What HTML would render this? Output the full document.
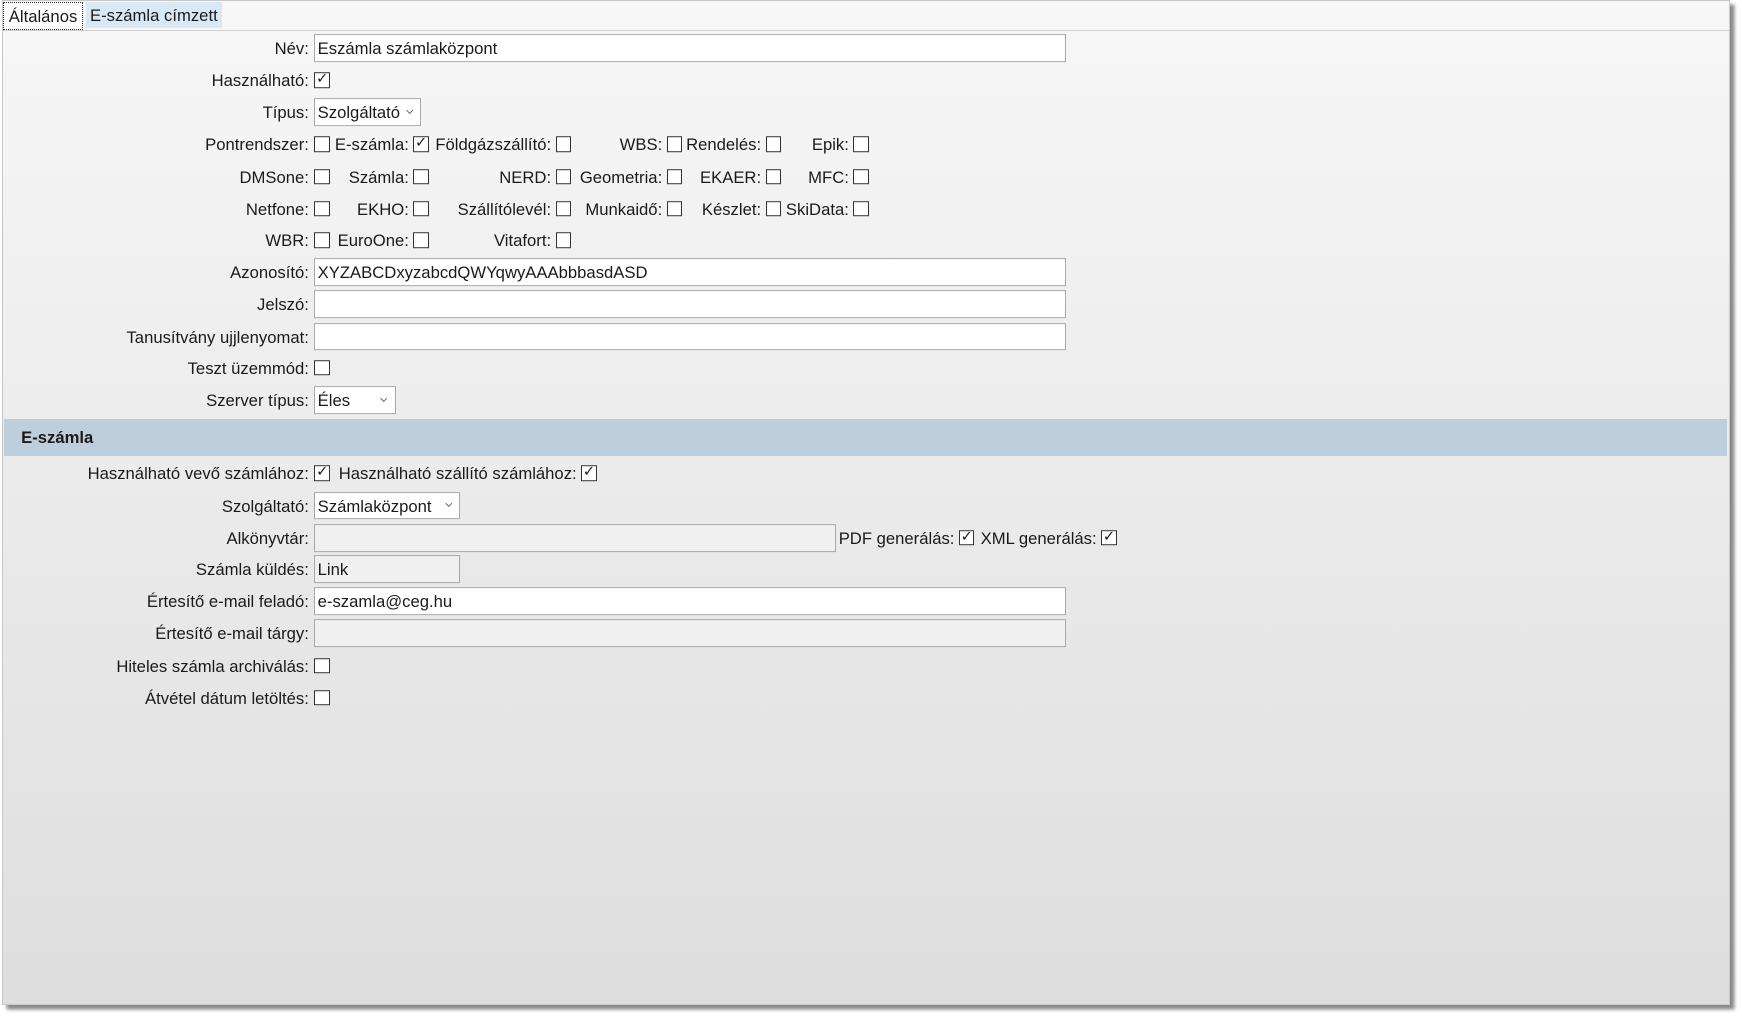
<!DOCTYPE html>
<html><head><meta charset="utf-8"><style>
html,body{margin:0;padding:0;width:1742px;height:1017px;overflow:hidden;background:#fff;}
#w{zoom:1.1111;position:relative;width:1568px;height:915px;font-family:"Liberation Sans",sans-serif;font-size:15px;color:#1a1a1a;}
#frame{position:absolute;left:2px;top:0;width:1553px;height:903px;border:1px solid #c8c8c8;box-shadow:4px 4px 3px #8a8a8a;background:linear-gradient(#f7f7f7,#dedede);}
.tab{position:absolute;top:2px;height:23px;line-height:25px;padding:0 4px;}
.t1{left:3px;background:#fff;border:1px dotted #333;}
.t2{left:77px;width:115px;background:#d9e8f5;}
.tl{position:absolute;left:3px;right:12px;top:27px;border-top:1px solid #d0d0d0;}
.lb{position:absolute;white-space:nowrap;transform:translate(-100%,-45%);}
.in{position:absolute;left:283px;border:1px solid #a8a8a8;background:#fff;box-sizing:border-box;height:25px;line-height:25px;padding-left:2px;transform:translateY(-50%);}
.g{background:#f0f0f0;}
.cb{position:absolute;width:14px;height:14px;border:1px solid #333;background:#fff;box-sizing:border-box;transform:translateY(-50%);font-size:13px;line-height:12px;text-align:center;}
.dd::after{content:"";position:absolute;right:7px;top:8px;width:4px;height:4px;border-right:1px solid #666;border-bottom:1px solid #666;transform:rotate(45deg);}
.band{position:absolute;left:4px;width:1550px;top:377px;height:33px;background:#bfcedb;}
.band span{position:absolute;left:15px;top:8px;font-weight:bold;}
</style></head><body><div id="w">
<div id="frame"></div>
<div class="tab t1">Általános</div><div class="tab t2">E-számla címzett</div><div class="tl"></div>
<div class="band"><span>E-számla</span></div>

<div class="lb" style="left:278px;top:43px">Név:</div><div class="in" style="top:43px;width:676px">Eszámla számlaközpont</div>
<div class="lb" style="left:278px;top:72px">Használható:</div><div class="cb" style="left:283px;top:72px">✓</div>
<div class="lb" style="left:278px;top:101px">Típus:</div><div class="in dd" style="top:101px;width:96px">Szolgáltató</div>

<div class="lb" style="left:278px;top:130px">Pontrendszer:</div><div class="cb" style="left:283px;top:130px"></div>
<div class="lb" style="left:368px;top:130px">E-számla:</div><div class="cb" style="left:372px;top:130px">✓</div>
<div class="lb" style="left:496px;top:130px">Földgázszállító:</div><div class="cb" style="left:500px;top:130px"></div>
<div class="lb" style="left:596px;top:130px">WBS:</div><div class="cb" style="left:600px;top:130px"></div>
<div class="lb" style="left:685px;top:130px">Rendelés:</div><div class="cb" style="left:689px;top:130px"></div>
<div class="lb" style="left:764px;top:130px">Epik:</div><div class="cb" style="left:768px;top:130px"></div>

<div class="lb" style="left:278px;top:159px">DMSone:</div><div class="cb" style="left:283px;top:159px"></div>
<div class="lb" style="left:368px;top:159px">Számla:</div><div class="cb" style="left:372px;top:159px"></div>
<div class="lb" style="left:496px;top:159px">NERD:</div><div class="cb" style="left:500px;top:159px"></div>
<div class="lb" style="left:596px;top:159px">Geometria:</div><div class="cb" style="left:600px;top:159px"></div>
<div class="lb" style="left:685px;top:159px">EKAER:</div><div class="cb" style="left:689px;top:159px"></div>
<div class="lb" style="left:764px;top:159px">MFC:</div><div class="cb" style="left:768px;top:159px"></div>

<div class="lb" style="left:278px;top:188px">Netfone:</div><div class="cb" style="left:283px;top:188px"></div>
<div class="lb" style="left:368px;top:188px">EKHO:</div><div class="cb" style="left:372px;top:188px"></div>
<div class="lb" style="left:496px;top:188px">Szállítólevél:</div><div class="cb" style="left:500px;top:188px"></div>
<div class="lb" style="left:596px;top:188px">Munkaidő:</div><div class="cb" style="left:600px;top:188px"></div>
<div class="lb" style="left:685px;top:188px">Készlet:</div><div class="cb" style="left:689px;top:188px"></div>
<div class="lb" style="left:764px;top:188px">SkiData:</div><div class="cb" style="left:768px;top:188px"></div>

<div class="lb" style="left:278px;top:216px">WBR:</div><div class="cb" style="left:283px;top:216px"></div>
<div class="lb" style="left:368px;top:216px">EuroOne:</div><div class="cb" style="left:372px;top:216px"></div>
<div class="lb" style="left:496px;top:216px">Vitafort:</div><div class="cb" style="left:500px;top:216px"></div>

<div class="lb" style="left:278px;top:245px">Azonosító:</div><div class="in" style="top:245px;width:676px">XYZABCDxyzabcdQWYqwyAAAbbbasdASD</div>
<div class="lb" style="left:278px;top:274px">Jelszó:</div><div class="in" style="top:274px;width:676px"></div>
<div class="lb" style="left:278px;top:303px">Tanusítvány ujjlenyomat:</div><div class="in" style="top:303px;width:676px"></div>
<div class="lb" style="left:278px;top:331px">Teszt üzemmód:</div><div class="cb" style="left:283px;top:331px"></div>
<div class="lb" style="left:278px;top:360px">Szerver típus:</div><div class="in dd" style="top:360px;width:73px">Éles</div>

<div class="lb" style="left:278px;top:426px">Használható vevő számlához:</div><div class="cb" style="left:283px;top:426px">✓</div>
<div class="lb" style="left:519px;top:426px">Használható szállító számlához:</div><div class="cb" style="left:523px;top:426px">✓</div>
<div class="lb" style="left:278px;top:455px">Szolgáltató:</div><div class="in dd" style="top:455px;width:131px">Számlaközpont</div>
<div class="lb" style="left:278px;top:484px">Alkönyvtár:</div><div class="in g" style="top:484px;width:469px"></div>
<div class="lb" style="left:859px;top:484px">PDF generálás:</div><div class="cb" style="left:863px;top:484px">✓</div>
<div class="lb" style="left:987px;top:484px">XML generálás:</div><div class="cb" style="left:991px;top:484px">✓</div>
<div class="lb" style="left:278px;top:512px">Számla küldés:</div><div class="in g" style="top:512px;width:131px">Link</div>
<div class="lb" style="left:278px;top:541px">Értesítő e-mail feladó:</div><div class="in" style="top:541px;width:676px">e-szamla@ceg.hu</div>
<div class="lb" style="left:278px;top:570px">Értesítő e-mail tárgy:</div><div class="in g" style="top:570px;width:676px"></div>
<div class="lb" style="left:278px;top:599px">Hiteles számla archiválás:</div><div class="cb" style="left:283px;top:599px"></div>
<div class="lb" style="left:278px;top:628px">Átvétel dátum letöltés:</div><div class="cb" style="left:283px;top:628px"></div>
</div></body></html>
